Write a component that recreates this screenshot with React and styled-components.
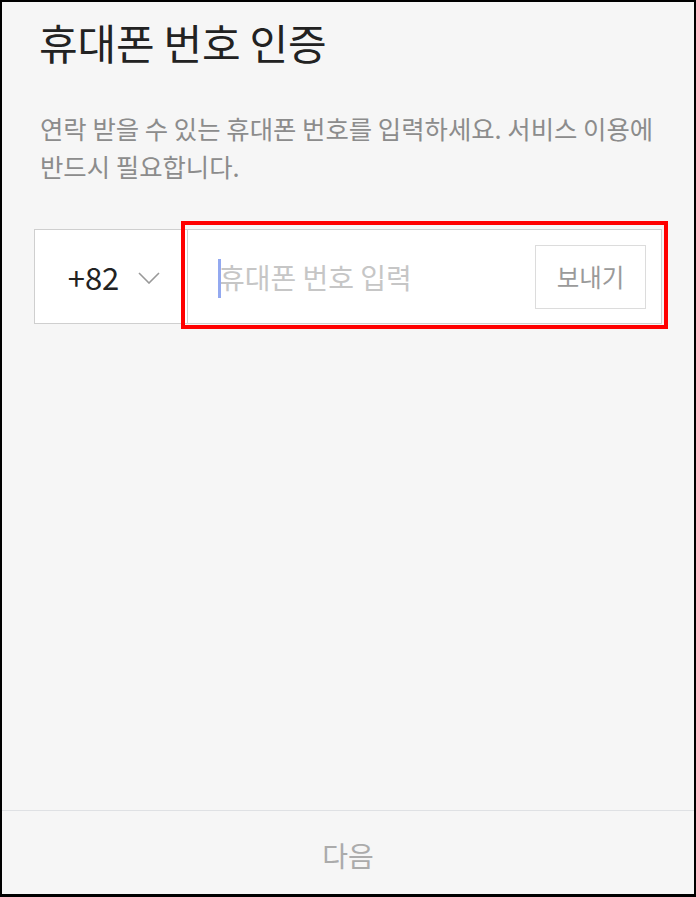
import React from 'react';
import styled, { createGlobalStyle } from 'styled-components';

const GlobalStyle = createGlobalStyle`
  html, body {
    margin: 0;
    padding: 0;
    background: #000;
  }
  * {
    box-sizing: border-box;
  }
`;

const Screen = styled.div`
  width: 696px;
  height: 897px;
  border: 2px solid #000;
  border-bottom-width: 3px;
  background: #f6f6f6;
  display: flex;
  flex-direction: column;
  font-family: "Noto Sans CJK KR", "Noto Sans", sans-serif;
`;

const Content = styled.div`
  flex: 1;
  padding: 14px 32px 0;
`;

const Title = styled.h1`
  margin: 0 0 0 5px;
  font-size: 42px;
  font-weight: 400;
  line-height: 52px;
  color: #222;
  letter-spacing: -0.2px;
`;

const Description = styled.p`
  margin: 41px 0 0 6px;
  font-size: 25.4px;
  line-height: 38px;
  color: #8c8c8c;
`;

const PhoneRow = styled.div`
  position: relative;
  display: flex;
  height: 95px;
  margin-top: 44px;
  background: #fff;
  border: 1px solid #cfcfcf;
`;

const CountrySelect = styled.button`
  width: 152px;
  display: flex;
  align-items: center;
  justify-content: center;
  gap: 19px;
  border: none;
  background: transparent;
  padding: 0 0 0 6px;
  font-family: inherit;
  font-size: 31px;
  color: #222;
  cursor: pointer;
`;

const Chevron = styled.svg`
  width: 22px;
  height: 12px;
  margin-top: 2px;
`;

const NumberField = styled.div`
  position: relative;
  flex: 1;
  display: flex;
  align-items: center;
  border-left: 1px solid #cfcfcf;
  padding: 0 15px 0 31px;
`;

const Caret = styled.span`
  position: absolute;
  left: 30px;
  top: 29px;
  width: 3px;
  height: 39px;
  background: #93a9f0;
`;

const NumberInput = styled.input`
  flex: 1;
  min-width: 0;
  border: none;
  outline: none;
  background: transparent;
  font-family: inherit;
  font-size: 28px;
  color: #222;
  padding: 0;
  caret-color: transparent;

  &::placeholder {
    color: #c6c6c6;
  }
`;

const SendButton = styled.button`
  width: 111px;
  height: 64px;
  border: 1px solid #dcdcdc;
  background: #fff;
  font-family: inherit;
  font-size: 24.5px;
  color: #9a9a9a;
  cursor: pointer;
`;

const Highlight = styled.div`
  position: absolute;
  left: 146px;
  top: -9px;
  right: -7px;
  bottom: -6px;
  border: 4px solid #f00;
  pointer-events: none;
`;

const Footer = styled.div`
  height: 84px;
  border-top: 1px solid #dfe1e4;
  display: flex;
  align-items: center;
  justify-content: center;
`;

const NextButton = styled.button`
  border: none;
  background: transparent;
  font-family: inherit;
  font-size: 28px;
  color: #ababab;
  padding: 0;
  margin: 4px 0 0 0;
`;

export default function App() {
  return (
    <>
      <GlobalStyle />
      <Screen>
        <Content>
          <Title>휴대폰 번호 인증</Title>
          <Description>
            연락 받을 수 있는 휴대폰 번호를 입력하세요. 서비스 이용에
            <br />
            반드시 필요합니다.
          </Description>
          <PhoneRow>
            <CountrySelect>
              +82
              <Chevron viewBox="0 0 22 12" fill="none">
                <path d="M1 1l10 10L21 1" stroke="#999" strokeWidth="1.6" />
              </Chevron>
            </CountrySelect>
            <NumberField>
              <Caret />
              <NumberInput placeholder="휴대폰 번호 입력" />
              <SendButton>보내기</SendButton>
            </NumberField>
            <Highlight />
          </PhoneRow>
        </Content>
        <Footer>
          <NextButton>다음</NextButton>
        </Footer>
      </Screen>
    </>
  );
}
